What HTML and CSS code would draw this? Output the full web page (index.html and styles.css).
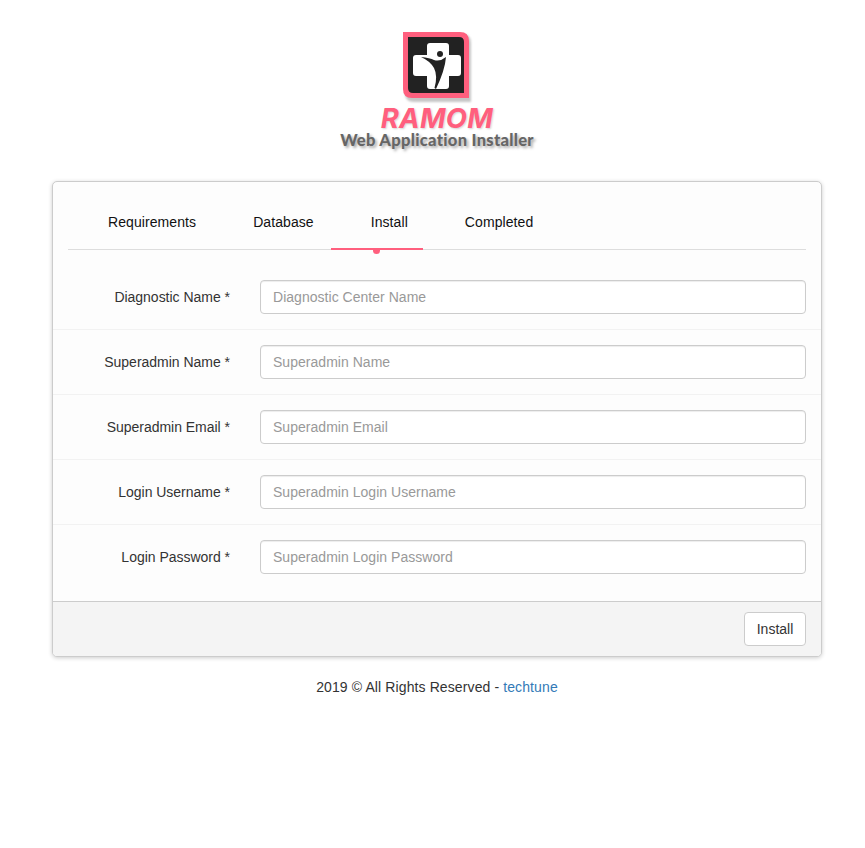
FILE: index.html
```html
<!DOCTYPE html>
<html lang="en">
<head>
<meta charset="utf-8">
<title>Web Application Installer</title>
<link rel="stylesheet" href="styles.css">
</head>
<body>
<div class="page">
  <header class="brand">
    <svg class="logo" width="72" height="72" viewBox="0 0 72 72" aria-hidden="true">
      <defs>
        <filter id="soft" x="-10%" y="-10%" width="125%" height="125%">
          <feGaussianBlur stdDeviation="1.2"/>
        </filter>
      </defs>
      <path d="M2 2H59Q68 2 68 11V70H11Q2 70 2 61Z" fill="#999" opacity=".55" filter="url(#soft)"/>
      <path d="M0 0H57Q66 0 66 9V66H9Q0 66 0 57Z" fill="#ff5f7e"/>
      <path d="M5 5H56Q61 5 61 10V61H10Q5 61 5 56Z" fill="#222"/>
      <path d="M27 11H43Q46 11 46 14V23H55Q58 23 58 26V41Q58 44 55 44H46V54Q46 57 43 57H27Q24 57 24 54V44H13Q10 44 10 41V26Q10 23 13 23H24V14Q24 11 27 11Z" fill="#fff"/>
      <circle cx="37" cy="22" r="3" fill="#222"/>
      <path d="M18 25Q27 26 31 28Q37 30 43 25Q42 38 33 57L31.5 56Q35 44 31 36Q27 29 18 25Z" fill="#222"/>
    </svg>
    <div class="wordmark">RAMOM</div>
    <div class="tagline">Web Application Installer</div>
  </header>

  <main class="card">
    <div class="tabs-wrap">
      <nav class="tabs">
        <a class="tab">Requirements</a>
        <a class="tab">Database</a>
        <a class="tab active">Install</a>
        <a class="tab">Completed</a>
      </nav>
    </div>
    <form class="form">
      <div class="row">
        <label class="label">Diagnostic Name *</label>
        <input class="input" type="text" placeholder="Diagnostic Center Name">
      </div>
      <div class="row">
        <label class="label">Superadmin Name *</label>
        <input class="input" type="text" placeholder="Superadmin Name">
      </div>
      <div class="row">
        <label class="label">Superadmin Email *</label>
        <input class="input" type="text" placeholder="Superadmin Email">
      </div>
      <div class="row">
        <label class="label">Login Username *</label>
        <input class="input" type="text" placeholder="Superadmin Login Username">
      </div>
      <div class="row last">
        <label class="label">Login Password *</label>
        <input class="input" type="text" placeholder="Superadmin Login Password">
      </div>
    </form>
    <div class="card-footer">
      <button class="btn" type="button">Install</button>
    </div>
  </main>

  <footer class="copyright">2019 © All Rights Reserved - <a class="link">techtune</a></footer>
</div>
</body>
</html>
```
FILE: styles.css
```css
* { box-sizing: border-box; }
html, body { margin: 0; background: #fff; }
body {
  font-family: "Liberation Sans", Arial, sans-serif;
  font-size: 14px;
  color: #222;
  line-height: 20px;
}
.page { width: 770px; margin-left: 52px; padding-top: 32px; }

.brand { display: flex; flex-direction: column; align-items: center; height: 149px; }
.logo { display: block; margin-left: 4px; }
.wordmark {
  font-family: Inter, "Liberation Sans", sans-serif;
  font-weight: 700;
  font-style: italic;
  font-size: 27.5px;
  line-height: 24px;
  letter-spacing: .3px;
  color: #ff5f7e;
  margin-top: 2px;
  text-shadow: 1px 1px 2px rgba(0,0,0,.18);
}
.tagline {
  font-family: Lato, "Liberation Sans", sans-serif;
  font-weight: 900;
  font-size: 16.5px;
  line-height: 20px;
  letter-spacing: .3px;
  color: #666;
  text-shadow: 2px 2px 3px rgba(0,0,0,.35);
}

.card {
  border: 1px solid #ccc;
  border-radius: 5px;
  background: #fdfdfd;
  box-shadow: 0 1px 4px rgba(0,0,0,.2);
  overflow: hidden;
}
.tabs-wrap { padding: 0 15px; }
.tabs { display: flex; gap: 2px; height: 68px; border-bottom: 1px solid #ddd; }
.tab {
  position: relative;
  display: block;
  padding: 30px 15px 0 40px;
  height: 68px;
  color: #111;
  letter-spacing: .08px;
}
.tab.active { border-bottom: 2px solid #ff5f7e; }
.tab.active::after {
  content: "";
  position: absolute;
  left: 42px;
  top: 68px;
  width: 7px;
  height: 4px;
  border-radius: 0 0 4px 4px;
  background: #ff5f7e;
}

.form { padding-top: 15px; }
.row {
  display: flex;
  align-items: center;
  padding: 15px 15px 15px 0;
  border-bottom: 1px solid #f2f2f2;
}
.row.last { border-bottom: 0; padding-bottom: 27px; }
.label {
  flex: none;
  width: 207px;
  padding-right: 30px;
  text-align: right;
  color: #333;
  letter-spacing: -.02px;
}
.input {
  flex: 1;
  height: 34px;
  padding: 6px 12px;
  border: 1px solid #ccc;
  border-radius: 4px;
  background: #fff;
  font: inherit;
  color: #555;
  box-shadow: inset 0 1px 1px rgba(0,0,0,.075);
}
.input::placeholder { color: #999; opacity: 1; letter-spacing: .03px; }

.card-footer {
  display: flex;
  justify-content: flex-end;
  padding: 10px 15px;
  background: #f4f4f4;
  border-top: 1px solid #ccc;
}
.btn {
  width: 62px;
  height: 34px;
  padding: 0;
  border: 1px solid #ccc;
  border-radius: 4px;
  background: #fff;
  color: #333;
  font: inherit;
}
.copyright { margin-top: 20px; text-align: center; color: #333; letter-spacing: .11px; }
.link { color: #337ab7; }
```
